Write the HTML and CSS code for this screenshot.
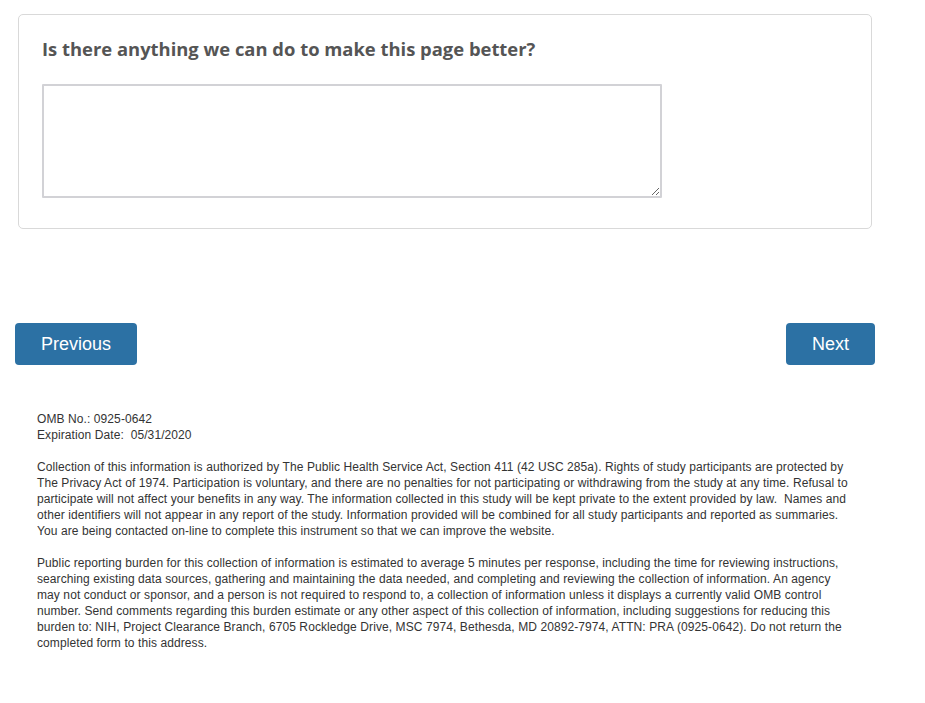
FILE: index.html
```html
<!DOCTYPE html>
<html lang="en">
<head>
    <meta charset="UTF-8">
    <meta name="viewport" content="width=device-width, initial-scale=1.0">
    <title>Survey Feedback</title>
    <link rel="stylesheet" href="styles.css">
</head>
<body>
    <div class="page">
        <div class="question-card">
            <h2 class="question-title">Is there anything we can do to make this page better?</h2>
            <textarea class="feedback-box" aria-label="Feedback"></textarea>
        </div>

        <div class="nav-buttons">
            <button class="nav-btn prev-btn">Previous</button>
            <button class="nav-btn next-btn">Next</button>
        </div>

        <div class="footer-notes">
            <p>OMB No.: 0925-0642<br>Expiration Date:&nbsp; 05/31/2020</p>
            <p>Collection of this information is authorized by The Public Health Service Act, Section 411 (42 USC 285a). Rights of study participants are protected by The Privacy Act of 1974. Participation is voluntary, and there are no penalties for not participating or withdrawing from the study at any time. Refusal to participate will not affect your benefits in any way. The information collected in this study will be kept private to the extent provided by law.&nbsp; Names and other identifiers will not appear in any report of the study. Information provided will be combined for all study participants and reported as summaries. You are being contacted on-line to complete this instrument so that we can improve the website.</p>
            <p>Public reporting burden for this collection of information is estimated to average 5 minutes per response, including the time for reviewing instructions, searching existing data sources, gathering and maintaining the data needed, and completing and reviewing the collection of information. An agency may not conduct or sponsor, and a person is not required to respond to, a collection of information unless it displays a currently valid OMB control number. Send comments regarding this burden estimate or any other aspect of this collection of information, including suggestions for reducing this burden to: NIH, Project Clearance Branch, 6705 Rockledge Drive, MSC 7974, Bethesda, MD 20892-7974, ATTN: PRA (0925-0642). Do not return the completed form to this address.</p>
        </div>
    </div>
</body>
</html>
```

FILE: styles.css
```css
body {
    font-family: 'Liberation Sans', Arial, sans-serif;
    background-color: #ffffff;
    color: #333;
    margin: 0;
    padding: 0;
}

.page {
    width: 860px;
    padding: 14px 0 0 15px;
}

.question-card {
    margin: 0 3px;
    padding: 22px 23px 30px 23px;
    border: 1px solid #d9d9d9;
    border-radius: 5px;
}

.question-title {
    font-family: 'Open Sans', sans-serif;
    font-weight: 700;
    font-size: 18.4px;
    color: #555;
    margin: 0 0 23px 0;
    line-height: 24px;
}

.feedback-box {
    display: block;
    width: 620px;
    height: 114px;
    box-sizing: border-box;
    border: 2px solid #d2d2d6;
    border-radius: 1px;
    margin: 0;
    padding: 6px;
    font-family: 'Liberation Sans', Arial, sans-serif;
    font-size: 14px;
}

.nav-buttons {
    display: flex;
    justify-content: space-between;
    margin-top: 94px;
}

.nav-btn {
    background-color: #2c71a4;
    color: #fff;
    border: none;
    border-radius: 4px;
    height: 42px;
    padding-top: 2px;
    font-family: 'Liberation Sans', Arial, sans-serif;
    font-size: 18px;
    cursor: pointer;
}

.prev-btn {
    width: 122px;
}

.next-btn {
    width: 89px;
}

.footer-notes {
    padding: 46px 0 0 22px;
    width: 816px;
    font-size: 12px;
    line-height: 16px;
    letter-spacing: 0.09px;
}

.footer-notes p {
    margin: 0 0 16px 0;
}
```
